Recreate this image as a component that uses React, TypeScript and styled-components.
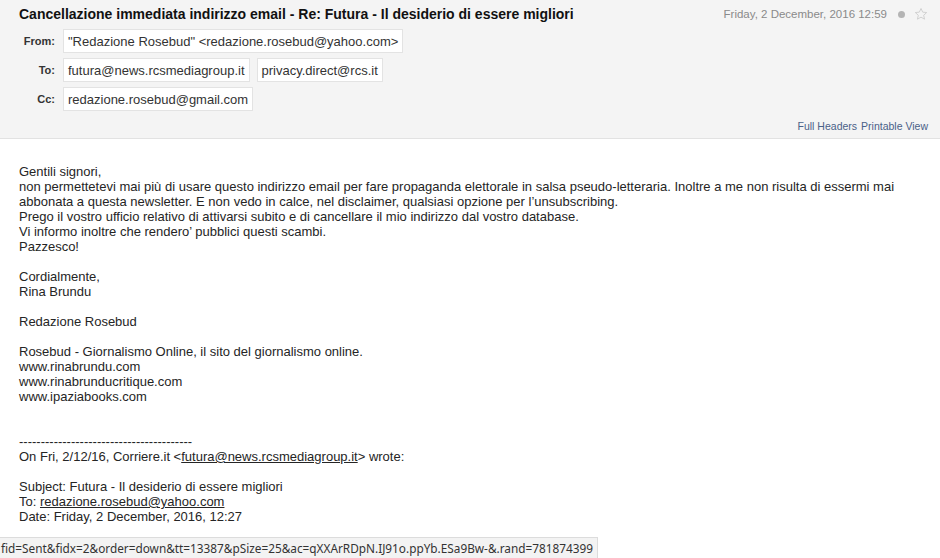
import React from 'react'
import styled, { createGlobalStyle } from 'styled-components'

const GlobalStyle = createGlobalStyle`
  html, body {
    margin: 0;
    padding: 0;
    background: #fff;
  }
  body {
    font-family: 'Liberation Sans', Arial, sans-serif;
    color: #222;
  }
`

const Page = styled.div`
  position: relative;
  width: 940px;
  height: 558px;
  overflow: hidden;
  background: #fff;
`

const Header = styled.div`
  background: #f4f4f4;
  border-bottom: 1px solid #e2e2e2;
  padding: 5px 12px 0 19px;
  height: 133px;
`

const TitleRow = styled.div`
  display: flex;
  align-items: center;
  justify-content: space-between;
  height: 18px;
`

const Subject = styled.h1`
  margin: 0;
  font-size: 14px;
  font-weight: bold;
  color: #111;
`

const Meta = styled.div`
  display: flex;
  align-items: center;
  gap: 9px;
  font-size: 11.5px;
  color: #8a8a8a;
`

const Dot = styled.span`
  width: 7px;
  height: 7px;
  border-radius: 50%;
  background: #b4b4b4;
  margin-left: 2px;
`

const Fields = styled.div`
  display: flex;
  flex-direction: column;
  gap: 5px;
  margin-top: 6px;
`

const FieldRow = styled.div`
  display: flex;
  align-items: center;
  gap: 7px;
  margin-left: -19px;
`

const Label = styled.span`
  width: 55px;
  text-align: right;
  font-size: 11px;
  font-weight: bold;
  color: #333;
  margin-right: 1px;
`

const Chip = styled.span`
  display: inline-flex;
  align-items: center;
  height: 22px;
  padding: 0 4px;
  background: #fff;
  border: 1px solid #e3e3e3;
  font-size: 13px;
  color: #333;
`

const Links = styled.div`
  display: flex;
  justify-content: flex-end;
  gap: 4px;
  margin-top: 9px;
  font-size: 10.5px;
  color: #4a6188;
`

const Body = styled.div`
  padding: 25px 19px 0;
  font-size: 13px;
  line-height: 15px;
  color: #252525;
`

const Line = styled.div<{ $gap?: number }>`
  margin-top: ${p => (p.$gap ?? 0) * 15}px;
  white-space: nowrap;
`

const Mail = styled.span`
  text-decoration: underline;
`

const StatusBar = styled.div`
  position: absolute;
  left: 0;
  bottom: 0;
  height: 20px;
  padding: 0 4px 0 1px;
  display: flex;
  align-items: center;
  white-space: nowrap;
  background: #f3f3f3;
  border-top: 1px solid #dcdcdc;
  border-right: 1px solid #dcdcdc;
  font-family: 'Noto Sans', 'Open Sans', sans-serif;
  font-size: 11.8px;
  color: #333;
`

const Star = () => (
  <svg width="14" height="14" viewBox="0 0 24 24">
    <path
      d="M12 2.5l2.9 6.3 6.9.7-5.2 4.6 1.5 6.8L12 17.4l-6.1 3.5 1.5-6.8-5.2-4.6 6.9-.7z"
      fill="none"
      stroke="#cfcfcf"
      strokeWidth="1.6"
      strokeLinejoin="round"
    />
  </svg>
)

export default function App() {
  return (
    <Page>
      <GlobalStyle />
      <Header>
        <TitleRow>
          <Subject>
            Cancellazione immediata indirizzo email - Re: Futura - Il desiderio di essere migliori
          </Subject>
          <Meta>
            <span>Friday, 2 December, 2016 12:59</span>
            <Dot />
            <Star />
          </Meta>
        </TitleRow>
        <Fields>
          <FieldRow>
            <Label>From:</Label>
            <Chip>"Redazione Rosebud" &lt;redazione.rosebud@yahoo.com&gt;</Chip>
          </FieldRow>
          <FieldRow>
            <Label>To:</Label>
            <Chip>futura@news.rcsmediagroup.it</Chip>
            <Chip>privacy.direct@rcs.it</Chip>
          </FieldRow>
          <FieldRow>
            <Label>Cc:</Label>
            <Chip>redazione.rosebud@gmail.com</Chip>
          </FieldRow>
        </Fields>
        <Links>
          <span>Full Headers</span>
          <span>Printable View</span>
        </Links>
      </Header>

      <Body>
        <Line>Gentili signori,</Line>
        <Line>
          non permettetevi mai più di usare questo indirizzo email per fare propaganda elettorale in
          salsa pseudo-letteraria. Inoltre a me non risulta di essermi mai
        </Line>
        <Line>
          abbonata a questa newsletter. E non vedo in calce, nel disclaimer, qualsiasi opzione per
          l’unsubscribing.
        </Line>
        <Line>
          Prego il vostro ufficio relativo di attivarsi subito e di cancellare il mio indirizzo dal
          vostro database.
        </Line>
        <Line>Vi informo inoltre che rendero’ pubblici questi scambi.</Line>
        <Line>Pazzesco!</Line>

        <Line $gap={1}>Cordialmente,</Line>
        <Line>Rina Brundu</Line>

        <Line $gap={1}>Redazione Rosebud</Line>

        <Line $gap={1}>Rosebud - Giornalismo Online, il sito del giornalismo online.</Line>
        <Line>www.rinabrundu.com</Line>
        <Line>www.rinabrunducritique.com</Line>
        <Line>www.ipaziabooks.com</Line>

        <Line $gap={2}>----------------------------------------</Line>
        <Line>
          On Fri, 2/12/16, Corriere.it &lt;<Mail>futura@news.rcsmediagroup.it</Mail>&gt; wrote:
        </Line>

        <Line $gap={1}>Subject: Futura - Il desiderio di essere migliori</Line>
        <Line>
          To: <Mail>redazione.rosebud@yahoo.com</Mail>
        </Line>
        <Line>Date: Friday, 2 December, 2016, 12:27</Line>
      </Body>

      <StatusBar>
        fid=Sent&amp;fidx=2&amp;order=down&amp;tt=13387&amp;pSize=25&amp;ac=qXXArRDpN.IJ91o.ppYb.ESa9Bw-&amp;.rand=781874399
      </StatusBar>
    </Page>
  )
}
